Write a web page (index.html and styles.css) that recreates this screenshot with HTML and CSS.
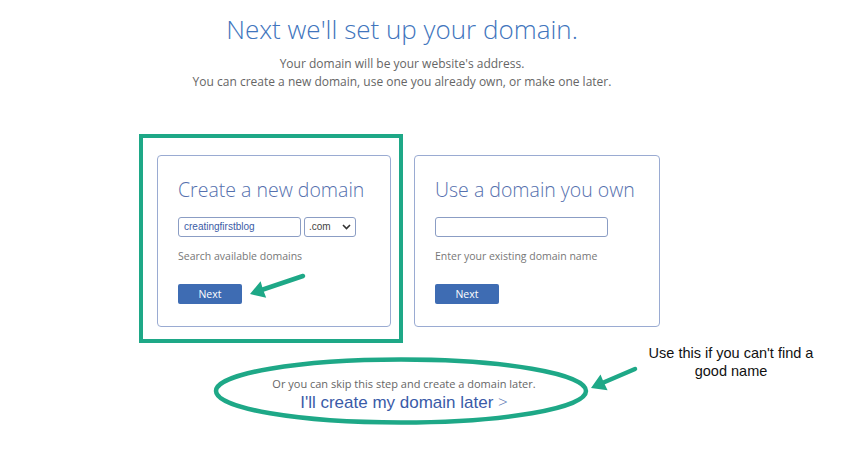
FILE: index.html
```html
<!DOCTYPE html>
<html lang="en">
<head>
<meta charset="utf-8">
<title>Next we'll set up your domain.</title>
<link rel="stylesheet" href="styles.css">
</head>
<body>
<main class="page">
  <h1 class="title">Next we'll set up your domain.</h1>
  <p class="intro">Your domain will be your website's address.<br>You can create a new domain, use one you already own, or make one later.</p>

  <div class="options">
    <div class="highlight">
      <section class="card card-new">
        <h2 class="card-title">Create a new domain</h2>
        <div class="field-row">
          <div class="input input-new">creatingfirstblog</div>
          <div class="select">.com
            <svg class="chev" width="9" height="6" viewBox="0 0 9 6"><path d="M1 1 L4.5 4.5 L8 1" fill="none" stroke="#333" stroke-width="1.6"/></svg>
          </div>
        </div>
        <p class="hint">Search available domains</p>
        <button class="btn">Next</button>
      </section>
    </div>
    <section class="card card-own">
      <h2 class="card-title">Use a domain you own</h2>
      <div class="field-row">
        <div class="input input-own"></div>
      </div>
      <p class="hint">Enter your existing domain name</p>
      <button class="btn">Next</button>
    </section>
  </div>

  <div class="later">
    <p class="skip">Or you can skip this step and create a domain later.</p>
    <a class="later-link" href="#">I'll create my domain later <span class="gt">&gt;</span></a>
  </div>
</main>

<svg class="annot" width="844" height="449" viewBox="0 0 844 449">
  <ellipse cx="401" cy="391" rx="185" ry="31.5" fill="none" stroke="#1ea887" stroke-width="4.5"/>
  <line x1="303" y1="276" x2="260" y2="290.5" stroke="#1ea887" stroke-width="4.5" stroke-linecap="round"/>
  <polygon points="250,294 260.6,281.2 263,289.6 266.2,297.8" fill="#1ea887"/>
  <line x1="635" y1="369" x2="600" y2="384" stroke="#1ea887" stroke-width="4.5" stroke-linecap="round"/>
  <polygon points="591,388 600.5,374.6 603.8,382.6 607.6,390.2" fill="#1ea887"/>
</svg>
<div class="note">Use this if you can't find a<br>good name</div>
</body>
</html>
```

FILE: styles.css
```css
* { box-sizing: border-box; }
html, body { margin: 0; padding: 0; background: #fff; }
body {
  width: 844px;
  height: 449px;
  position: relative;
  overflow: hidden;
  font-family: "Open Sans", "Liberation Sans", sans-serif;
}
.page {
  margin-left: 139px;
  width: 526px;
  text-align: center;
}
.title {
  margin: 0;
  padding-top: 12px;
  font-size: 26px;
  line-height: 34px;
  font-weight: 300;
  color: #4175bd;
}
.intro {
  margin: 9px 0 0;
  font-size: 12px;
  line-height: 18px;
  color: #666;
}
.options {
  display: flex;
  align-items: flex-start;
  gap: 11px;
  margin-top: 43px;
  text-align: left;
}
.highlight {
  border: 4px solid #1ea887;
  padding: 17px 8px 12px 14px;
}
.card {
  border: 1px solid #9aabd2;
  border-radius: 4px;
  height: 172px;
  padding: 21px 20px 0 20px;
}
.card-new { width: 234px; }
.card-own { width: 246px; margin-top: 21px; }
.card-title {
  margin: 0;
  font-size: 19.5px;
  line-height: 26px;
  font-weight: 300;
  color: #5570ae;
  white-space: nowrap;
}
.field-row {
  display: flex;
  gap: 3px;
  margin-top: 14px;
}
.input, .select {
  height: 20px;
  border: 1px solid #8b9dc4;
  border-radius: 3px;
  background: #fff;
  font-family: "Liberation Sans", Arial, sans-serif;
  font-size: 10px;
  line-height: 18px;
}
.input { padding: 0 5px; color: #3b5ca6; }
.input-new { width: 123px; }
.input-own { width: 173px; }
.select {
  width: 52px;
  padding: 0 4px 0 4px;
  color: #444;
  display: flex;
  align-items: center;
  justify-content: space-between;
}
.chev { display: block; }
.hint {
  margin: 11px 0 0;
  font-size: 10.5px;
  line-height: 16px;
  color: #777;
}
.btn {
  display: block;
  margin-top: 20px;
  width: 64px;
  height: 20px;
  border: 0;
  border-radius: 2px;
  background: #3e6cb3;
  color: #fff;
  font-family: "Open Sans", "Liberation Sans", sans-serif;
  font-size: 10.5px;
  line-height: 20px;
  padding: 0;
}
.later {
  margin-top: 33px;
  margin-left: 4px;
}
.skip {
  margin: 0;
  font-size: 11px;
  line-height: 15px;
  color: #666;
}
.later-link {
  display: inline-block;
  margin-top: 1px;
  font-family: "Liberation Sans", Arial, sans-serif;
  font-size: 17px;
  line-height: 20px;
  color: #3a5ba8;
  text-decoration: none;
}
.gt { font-family: "Open Sans", sans-serif; font-weight: 300; color: #5a75b5; }
.annot {
  position: absolute;
  left: 0;
  top: 0;
  pointer-events: none;
}
.note {
  position: absolute;
  left: 630px;
  top: 344px;
  width: 202px;
  text-align: center;
  font-family: "Liberation Sans", Arial, sans-serif;
  font-size: 14.5px;
  line-height: 18px;
  color: #111;
}
```
